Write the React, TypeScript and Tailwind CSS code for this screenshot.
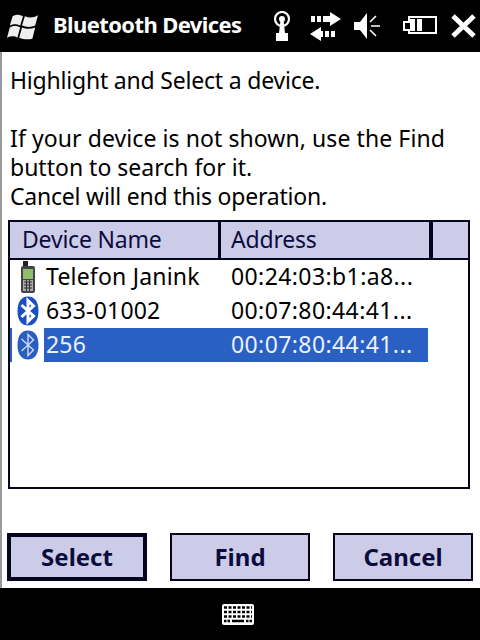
const BT_BODY = "M11 0.500C17 0.500 21.500 5 21.500 15C21.500 25 17 29.500 11 29.500C5 29.500 0.500 25 0.500 15C0.500 5 5 0.500 11 0.500Z";
const BT_MARK = "M4.500 9L16.500 20L11 25.500V4.500L16.500 10L4.500 21";

const BtGlyph = () => (
  <svg width="22" height="30" viewBox="0 0 22 30" className="block">
    <path d={BT_BODY} fill="#1a50c4" />
    <path d={BT_MARK} fill="none" stroke="#fff" strokeWidth="3" />
  </svg>
);

const BtSelected = () => (
  <div className="w-[32px] h-[34px] bg-white flex items-center justify-center">
    <svg width="22" height="30" viewBox="0 0 22 30" className="block">
      <path d={BT_BODY} fill="#2a5dc0" />
      <path d={BT_MARK} fill="none" stroke="#cfdcf5" strokeWidth="1.400" />
    </svg>
  </div>
);

const Phone = () => (
  <svg width="18" height="32" viewBox="0 0 18 32" className="block">
    <rect x="4" y="0" width="5" height="6" fill="#222" />
    <rect x="2" y="5" width="14" height="27" rx="2" fill="#444" />
    <rect x="4" y="8" width="10" height="10" fill="#8fbf6a" />
    <rect x="4" y="19" width="10" height="11" fill="#aaa" />
    <path d="M5 21H13M5 24H13M5 27H13" stroke="#333" strokeWidth="1" />
    <path d="M7.500 19V30M10.500 19V30" stroke="#333" strokeWidth="1" />
  </svg>
);

const Row = ({ icon, name, addr, selected }: { icon: React.ReactNode; name: string; addr: string; selected?: boolean }) => (
  <div className={`flex items-center h-[34px] w-[418px] ${selected ? "bg-[#2a5fc4] text-[#eaf1ff]" : "text-black"}`}>
    <div className={`w-[36px] flex shrink-0 ${selected ? "pl-[2px]" : "justify-center"}`}>{icon}</div>
    <div className="w-[185px] shrink-0 pb-[2px] tracking-[0.2px]">{name}</div>
    <div className="pb-[2px] tracking-[0.4px]">{addr}</div>
  </div>
);

const Btn = ({ label, active }: { label: string; active?: boolean }) => (
  <div className={`w-[140px] h-[48px] bg-[#cccce9] flex items-center justify-center pb-[2px] font-bold text-[24px] text-[#0c0c3c] border-[#04041e] ${active ? "border-4" : "border-2"}`}>
    {label}
  </div>
);

export default function App() {
  return (
    <div className="w-[480px] h-[640px] flex flex-col bg-white overflow-hidden text-[23px] leading-[29px] [font-family:'Noto_Sans',sans-serif]">
      <div className="h-[52px] bg-black flex items-center shrink-0">
        <svg width="31" height="29" viewBox="0 0 33 30" className="ml-[7px] block">
          <path d="M6 4C12 1 14 3 17 4L14 14C10 12 7 12 3 14Z" fill="#eee" />
          <path d="M19 4C23 6 28 6 33 3L30 14C26 16 21 16 16 14Z" fill="#eee" />
          <path d="M3 16C7 14 10 14 14 16L11 27C8 25 4 25 0 27Z" fill="#eee" />
          <path d="M16 16C20 18 25 18 30 16L27 28C23 29 18 29 13 27Z" fill="#eee" />
        </svg>
        <div className="ml-[15px] pb-[3px] text-white font-bold text-[22px] tracking-[-0.6px] whitespace-nowrap">Bluetooth Devices</div>
        <div className="ml-auto flex items-center">
          <svg width="18" height="31" viewBox="0 0 18 31" className="block mr-[19px]">
            <circle cx="9" cy="8" r="7" fill="none" stroke="#fff" strokeWidth="2.200" />
            <circle cx="9" cy="8" r="3" fill="#fff" />
            <path d="M7.500 9H10.500L12 22H15V30H3V22H6Z" fill="#fff" />
          </svg>
          <svg width="31" height="29" viewBox="0 0 31 29" className="block mr-[12px]">
            <path d="M1 4H5V10H1ZM7 4H11V10H7ZM13 4H20V0L31 7L20 14V10H13Z" fill="#fff" />
            <path d="M19 19H15V25H19ZM25 19H21V25H25Z" fill="#fff" />
            <path d="M13 19H11V15L0 22L11 29V25H13Z" fill="#fff" />
          </svg>
          <svg width="28" height="28" viewBox="0 0 28 28" className="block mr-[22px]">
            <path d="M1 10H7L14 1V27L7 18H1Z" fill="#fff" />
            <path d="M17 10L23 4M18 14H27M17 18L23 24" stroke="#fff" strokeWidth="1.600" fill="none" />
          </svg>
          <svg width="34" height="20" viewBox="0 0 34 20" className="block mr-[14px]">
            <path d="M6 1H33V17H6V14H1V6H6Z" fill="none" stroke="#fff" strokeWidth="2" />
            <rect x="7" y="3" width="5" height="12" fill="#fff" />
            <rect x="14" y="3" width="5" height="12" fill="#fff" />
          </svg>
          <svg width="25" height="24" viewBox="0 0 25 24" className="block mr-[4px]">
            <path d="M2 2L23 22M23 2L2 22" stroke="#fff" strokeWidth="5" fill="none" />
          </svg>
        </div>
      </div>

      <div className="flex-1 flex flex-col border-l-[2px] border-[#9a9a9a] text-black">
        <div className="pl-[8px] pt-[14px] h-[168px] shrink-0 whitespace-nowrap">
          <div className="tracking-[-0.2px]">Highlight and Select a device.</div>
          <div className="mt-[29px] tracking-[0.08px]">If your device is not shown, use the Find</div>
          <div>button to search for it.</div>
          <div className="tracking-[-0.22px]">Cancel will end this operation.</div>
        </div>

        <div className="ml-[6px] w-[462px] h-[269px] border-2 border-[#04041e] shrink-0 whitespace-nowrap">
          <div className="h-[38px] bg-[#cccce9] border-b-2 border-[#04041e] flex items-center text-[#0c0c3c]">
            <div className="w-[211px] h-full pl-[12px] pb-[2px] border-r-[3px] border-[#04041e] flex items-center tracking-[-0.2px]">Device Name</div>
            <div className="w-[212px] h-full pl-[10px] pb-[2px] border-r-[4px] border-[#04041e] flex items-center tracking-[-0.2px]">Address</div>
          </div>
          <Row icon={<Phone />} name="Telefon Janink" addr="00:24:03:b1:a8..." />
          <Row icon={<BtGlyph />} name="633-01002" addr="00:07:80:44:41..." />
          <Row icon={<BtSelected />} name="256" addr="00:07:80:44:41..." selected />
        </div>

        <div className="ml-[5px] w-[466px] mt-[44px] flex justify-between">
          <Btn label="Select" active />
          <Btn label="Find" />
          <Btn label="Cancel" />
        </div>
      </div>

      <div className="h-[52px] bg-black flex items-center justify-center shrink-0">
        <svg width="32" height="21" viewBox="0 0 32 21" className="block mr-[4px]">
          <rect x="0" y="0" width="32" height="21" rx="2" fill="#fff" />
          <path d="M2 3.500H30M2 8H30M2 12.500H30" stroke="#000" strokeWidth="2.500" strokeDasharray="3 1.500" />
          <path d="M2 17H8M24 17H30" stroke="#000" strokeWidth="2.500" strokeDasharray="2.500 1" />
          <path d="M10 17H22" stroke="#000" strokeWidth="2.500" />
        </svg>
      </div>
    </div>
  );
}
